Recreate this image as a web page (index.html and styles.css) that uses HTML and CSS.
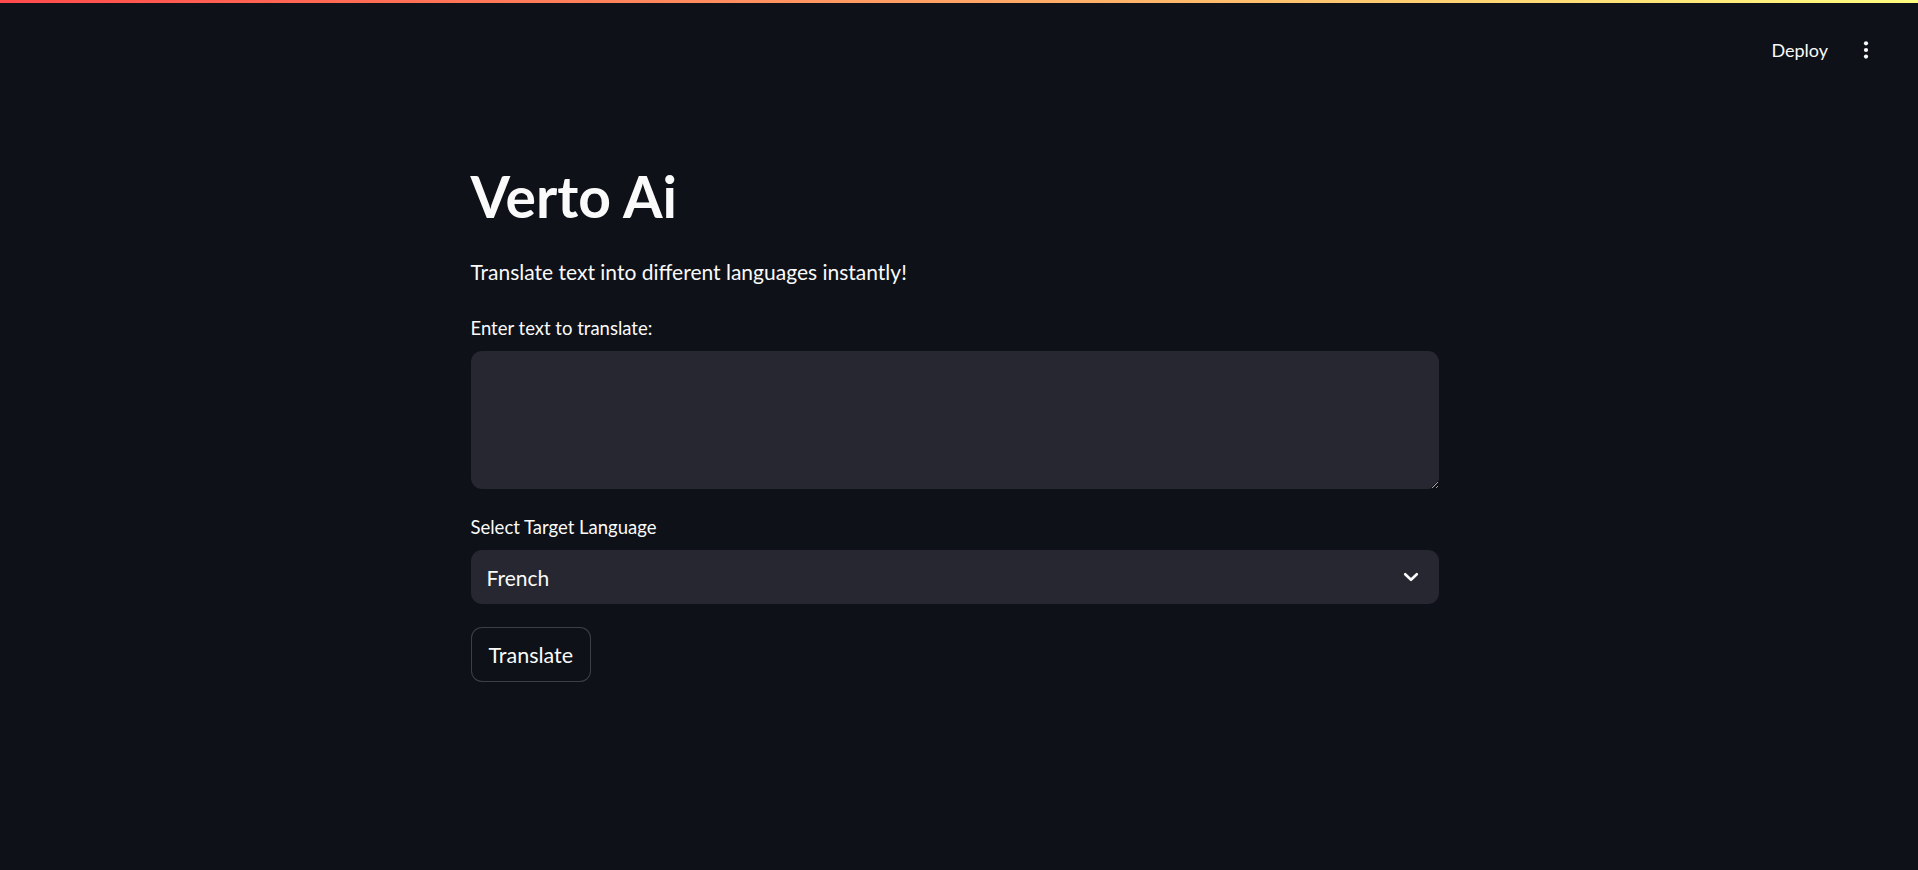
FILE: index.html
```html
<!DOCTYPE html>
<html lang="en">
<head>
<meta charset="utf-8">
<title>Verto Ai</title>
<link rel="stylesheet" href="styles.css">
</head>
<body>
<div class="decoration"></div>
<header class="toolbar">
  <button class="deploy">Deploy</button>
  <button class="menu" aria-label="Main menu">
    <svg width="24" height="24" viewBox="0 0 24 24"><circle cx="12" cy="5.3" r="2.1" fill="#fafafa"/><circle cx="12" cy="12" r="2.1" fill="#fafafa"/><circle cx="12" cy="18.6" r="2.1" fill="#fafafa"/></svg>
  </button>
</header>
<main class="main">
  <div class="block">
    <h1 class="title">Verto Ai</h1>
    <p class="subtitle">Translate text into different languages instantly!</p>
    <label class="label" for="src">Enter text to translate:</label>
    <textarea id="src" class="textarea"></textarea>
    <label class="label label-select">Select Target Language</label>
    <div class="select">
      <span class="select-value">French</span>
      <svg class="chevron" width="20" height="20" viewBox="0 0 20 20"><polyline points="4.2,7.2 10,12.8 15.8,7.2" fill="none" stroke="#fafafa" stroke-width="2.6" stroke-linecap="round" stroke-linejoin="round"/></svg>
    </div>
    <button class="btn">Translate</button>
  </div>
</main>
</body>
</html>
```
FILE: styles.css
```css
html, body {
  margin: 0;
  padding: 0;
  background: #0e1117;
  color: #fafafa;
  font-family: Lato, "Noto Sans", sans-serif;
  color-scheme: dark;
}
.decoration {
  height: 3px;
  background: linear-gradient(90deg, #ff4b4b, #fffd80);
}
.toolbar {
  display: flex;
  justify-content: flex-end;
  align-items: center;
  gap: 26px;
  padding: 35px 40px 0 0;
  height: 24px;
}
.deploy {
  background: none;
  border: none;
  color: #fafafa;
  font-family: inherit;
  font-size: 18px;
  line-height: 24px;
  padding: 0;
}
.menu {
  background: none;
  border: none;
  padding: 0;
  width: 24px;
  height: 24px;
  display: flex;
}
.main {
  display: flex;
  justify-content: center;
  padding: 100px 9px 0 0;
}
.block {
  width: 968px;
  display: flex;
  flex-direction: column;
  align-items: flex-start;
}
.title {
  margin: 0;
  font-size: 57px;
  line-height: 68px;
  font-weight: 700;
}
.subtitle {
  margin: 25px 0 0;
  font-size: 21px;
  line-height: 33px;
}
.label {
  margin-top: 27px;
  font-size: 18.5px;
  line-height: 26px;
}
.label-select {
  margin-top: 25px;
}
.textarea {
  margin-top: 10px;
  width: 100%;
  height: 138px;
  box-sizing: border-box;
  background: #262730;
  border: none;
  border-radius: 11px;
  resize: vertical;
  color: #fafafa;
  font-family: inherit;
  font-size: 21px;
  padding: 14px 16px;
  outline: none;
}
.select {
  margin-top: 10px;
  width: 100%;
  height: 54px;
  box-sizing: border-box;
  background: #262730;
  border-radius: 11px;
  display: flex;
  align-items: center;
  justify-content: space-between;
  padding: 0 18px 0 16px;
}
.select-value {
  font-size: 21px;
  line-height: 25px;
}
.chevron {
  display: block;
}
.btn {
  margin-top: 23px;
  height: 55px;
  box-sizing: border-box;
  padding: 0 17px;
  background: #0e1117;
  border: 1px solid rgba(250, 250, 250, 0.2);
  border-radius: 11px;
  color: #fafafa;
  font-family: inherit;
  font-size: 21.5px;
}
```
